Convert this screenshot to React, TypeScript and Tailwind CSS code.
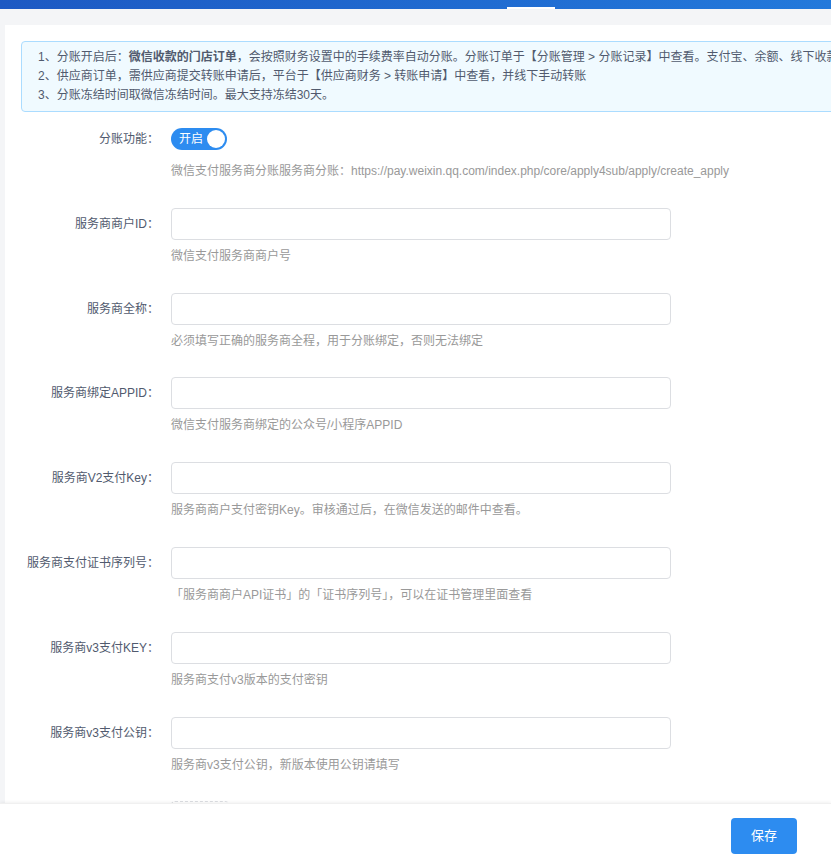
import React from "react";

const font = { fontFamily: '"Liberation Sans", "Noto Sans CJK SC", sans-serif' };

type Row = { label: string; help: React.ReactNode };

const rows: Row[] = [
  { label: "服务商商户ID：", help: "微信支付服务商商户号" },
  { label: "服务商全称：", help: "必须填写正确的服务商全程，用于分账绑定，否则无法绑定" },
  { label: "服务商绑定APPID：", help: "微信支付服务商绑定的公众号/小程序APPID" },
  { label: "服务商V2支付Key：", help: "服务商商户支付密钥Key。审核通过后，在微信发送的邮件中查看。" },
  { label: "服务商支付证书序列号：", help: "「服务商商户API证书」的「证书序列号」，可以在证书管理里面查看" },
  { label: "服务商v3支付KEY：", help: "服务商支付v3版本的支付密钥" },
  { label: "服务商v3支付公钥：", help: "服务商v3支付公钥，新版本使用公钥请填写" },
];

function FormRow({ label, children, help }: { label: string; children: React.ReactNode; help: React.ReactNode }) {
  return (
    <div className="flex mb-[26.8px]">
      <div className="w-[138px] shrink-0 h-[32px] flex items-center justify-end text-[12px] text-[#515a6e] whitespace-nowrap">
        {label}
      </div>
      <div className="ml-[12px] flex flex-col">
        <div className="h-[32px] flex items-center">{children}</div>
        <div className="mt-[6px] h-[20px] leading-[20px] text-[12px] text-[#999] whitespace-nowrap">{help}</div>
      </div>
    </div>
  );
}

export default function App() {
  return (
    <div className="w-[831px] h-[867px] overflow-hidden flex flex-col bg-white" style={font}>
      <div className="flex-1 flex flex-col min-h-0 bg-[#f4f5f7]">
        <div className="h-[9px] shrink-0 bg-gradient-to-r from-[#1d59c3] to-[#2379db] flex items-end">
          <div className="ml-[507px] w-[48px] h-[2px] bg-white" />
        </div>
        <div className="flex-1 min-h-0 pt-[16px] pl-[5px] flex">
          <div className="flex-1 bg-white overflow-hidden pl-[16px] pt-[16px]">
            <div className="w-[1000px] border border-[#abdcff] bg-[#f0faff] rounded-[4px] px-[16px] py-[6px] text-[12px] leading-[19px] text-[#515a6e] whitespace-nowrap">
              <div>
                1、分账开启后：<span className="font-bold">微信收款的门店订单</span>，会按照财务设置中的手续费率自动分账。分账订单于【分账管理 &gt; 分账记录】中查看。支付宝、余额、线下收款的订单不参与分账。
              </div>
              <div>2、供应商订单，需供应商提交转账申请后，平台于【供应商财务 &gt; 转账申请】中查看，并线下手动转账</div>
              <div>3、分账冻结时间取微信冻结时间。最大支持冻结30天。</div>
            </div>
            <div className="mt-[11px]">
              <FormRow
                label="分账功能："
                help="微信支付服务商分账服务商分账：https://pay.weixin.qq.com/index.php/core/apply4sub/apply/create_apply"
              >
                <div className="w-[56px] h-[22px] rounded-full bg-[#2d8cf0] flex items-center justify-between pl-[8px] pr-[2px]">
                  <span className="text-[12px] text-white leading-none">开启</span>
                  <span className="w-[18px] h-[18px] rounded-full bg-white" />
                </div>
              </FormRow>
              {rows.map((r) => (
                <FormRow key={r.label} label={r.label} help={r.help}>
                  <input className="w-[500px] h-[32px] border border-[#dcdee2] rounded-[4px] px-[7px] text-[12px] outline-none" />
                </FormRow>
              ))}
              <div className="flex">
                <div className="w-[138px] shrink-0" />
                <div className="ml-[12px] w-[58px] h-[58px] border border-dashed border-[#dcdee2] rounded-[4px]" />
              </div>
            </div>
          </div>
        </div>
      </div>
      <div className="h-[64px] shrink-0 bg-white shadow-[0_-1px_3px_rgba(0,0,0,0.06)] border-t border-[#f0f0f0] flex items-center justify-end pr-[34px] relative">
        <button className="w-[66px] h-[36px] rounded-[4px] bg-[#2d8cf0] text-white text-[13px]">保存</button>
      </div>
    </div>
  );
}
